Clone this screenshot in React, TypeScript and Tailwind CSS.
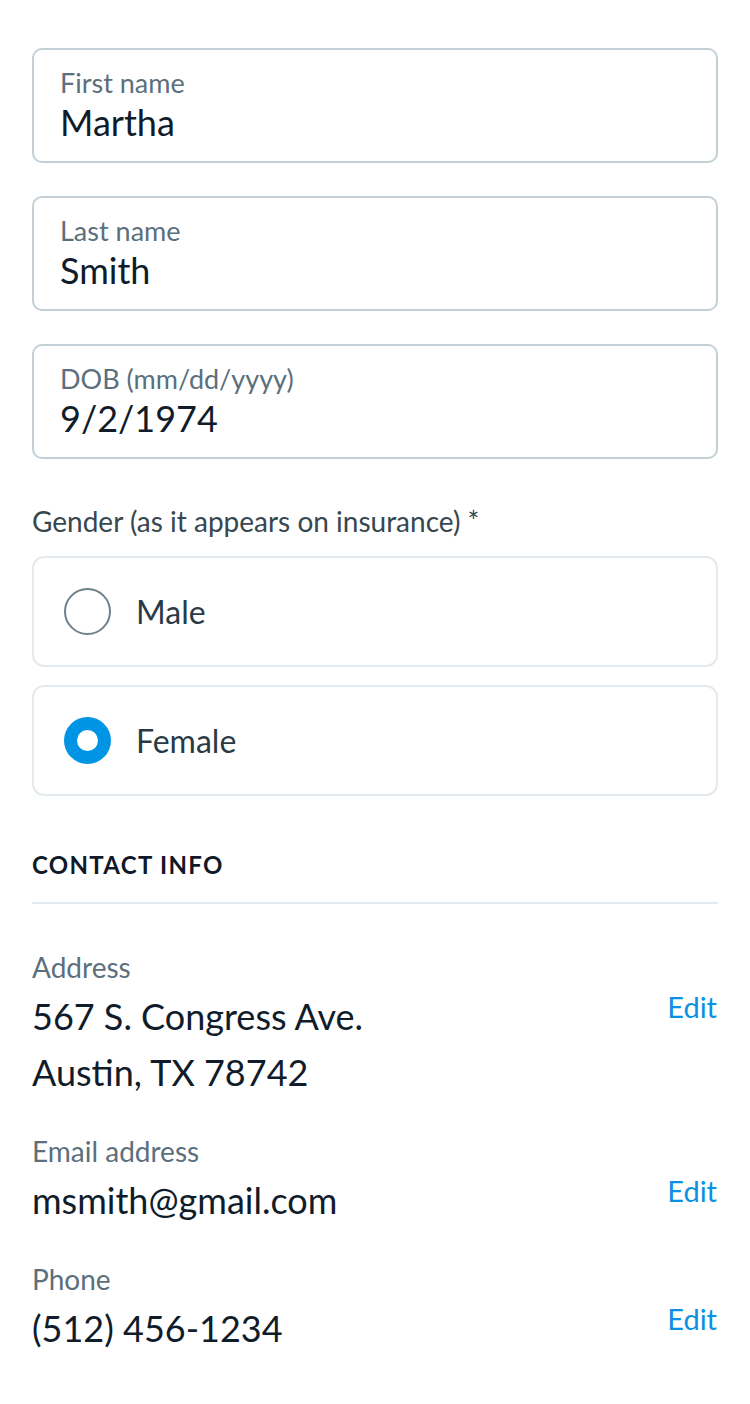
import React from "react";

const font = { fontFamily: "Lato, 'Open Sans', sans-serif" };

function Field({ label, value }: { label: string; value: string }) {
  return (
    <div className="h-[115px] rounded-[10px] border-2 border-[#c5cfd6] pl-[26px] pr-4 pt-[16px]">
      <div className="text-[27px] leading-[34px] text-[#5b6f7d]">{label}</div>
      <div className="text-[36px] leading-[44px] text-[#111c2a]">{value}</div>
    </div>
  );
}

function Radio({ label, checked }: { label: string; checked?: boolean }) {
  return (
    <div className="flex h-[111px] items-center rounded-[12px] border-2 border-[#e2eaef] pl-[30px]">
      {checked ? (
        <div className="flex h-[47px] w-[47px] items-center justify-center rounded-full bg-[#0094e5]">
          <div className="h-[21px] w-[21px] rounded-full bg-white" />
        </div>
      ) : (
        <div className="h-[47px] w-[47px] rounded-full border-2 border-[#6e808c]" />
      )}
      <span className="ml-[25px] text-[32px] leading-[40px] text-[#2a3a45]">{label}</span>
    </div>
  );
}

function ContactItem({ label, lines }: { label: string; lines: string[] }) {
  return (
    <div className="flex justify-between">
      <div>
        <div className="text-[28px] leading-[42px] text-[#5b6f7d]">{label}</div>
        {lines.map((l) => (
          <div key={l} className="text-[36px] leading-[56px] text-[#111c2a]">
            {l}
          </div>
        ))}
      </div>
      <div className="pt-[43px] pr-[1px] text-[29px] leading-[36px] text-[#0a91e4]">Edit</div>
    </div>
  );
}

export default function App() {
  return (
    <div style={font} className="min-h-[1404px] bg-white px-[32px] pt-[48px]">
      <div className="flex flex-col gap-[33px]">
        <Field label="First name" value="Martha" />
        <Field label="Last name" value="Smith" />
        <Field label="DOB (mm/dd/yyyy)" value="9/2/1974" />
      </div>
      <div className="mt-[45px] text-[28px] leading-[34px] text-[#37474f]">
        Gender (as it appears on insurance) *
      </div>
      <div className="mt-[18px] flex flex-col gap-[18px]">
        <Radio label="Male" />
        <Radio label="Female" checked />
      </div>
      <div className="mt-[54px] text-[24px] font-bold uppercase leading-[30px] tracking-[1.3px] text-[#111827]">
        Contact Info
      </div>
      <div className="mt-[22px] h-[2px] bg-[#e3ebf0]" />
      <div className="mt-[42px] flex flex-col gap-[30px]">
        <ContactItem label="Address" lines={["567 S. Congress Ave.", "Austin, TX 78742"]} />
        <ContactItem label="Email address" lines={["msmith@gmail.com"]} />
        <ContactItem label="Phone" lines={["(512) 456-1234"]} />
      </div>
    </div>
  );
}
